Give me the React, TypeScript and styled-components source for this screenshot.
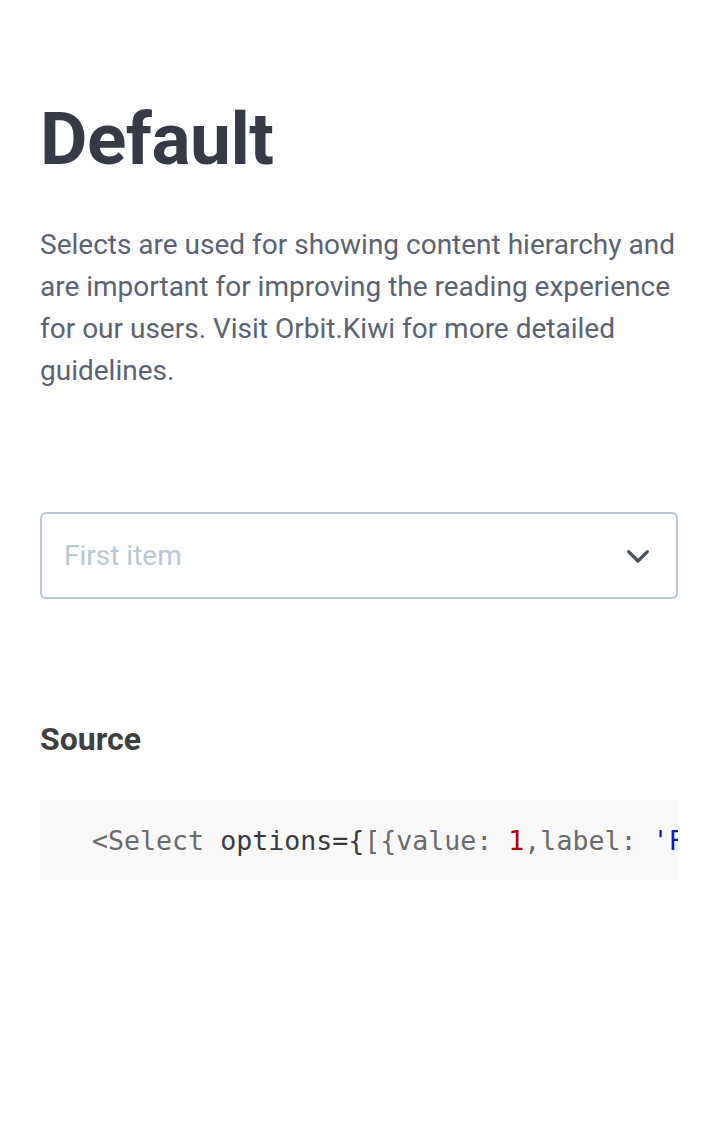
import React from 'react'
import styled, { createGlobalStyle } from 'styled-components'

const GlobalStyle = createGlobalStyle`
  html, body {
    margin: 0;
    padding: 0;
    background: #ffffff;
  }
  body {
    font-family: Roboto, 'Liberation Sans', sans-serif;
  }
`

const Page = styled.div`
  padding: 96px 40px 40px;
  display: flex;
  flex-direction: column;
`

const Title = styled.h1`
  margin: 0;
  font-size: 73px;
  font-weight: 700;
  line-height: 86px;
  color: #353a46;
  letter-spacing: -0.5px;
`

const Lead = styled.p`
  margin: 42px 0 0;
  font-size: 28px;
  line-height: 42px;
  color: #5b6272;
`

const SelectBox = styled.div`
  margin-top: 120px;
  height: 87px;
  box-sizing: border-box;
  border: 2px solid #bac7d5;
  border-radius: 6px;
  display: flex;
  align-items: center;
  justify-content: space-between;
  padding: 0 23px 0 22px;
`

const Placeholder = styled.span`
  font-size: 28px;
  color: #bac7d5;
`

const Chevron = styled.svg`
  width: 30px;
  height: 30px;
  display: block;
`

const SectionTitle = styled.h3`
  margin: 120px 0 0;
  font-size: 32px;
  font-weight: 700;
  line-height: 40px;
  color: #3f3f3f;
`

const CodeBlock = styled.pre`
  margin: 41px 0 0;
  height: 80px;
  box-sizing: border-box;
  background: #f9f9f9;
  overflow: hidden;
  padding: 0 0 0 20px;
  display: flex;
  align-items: center;
  font-family: 'DejaVu Sans Mono', 'Liberation Mono', monospace;
  font-size: 26.6px;
  white-space: pre;
  color: #666666;
`

const Tok = styled.span<{ $kind?: 'tag' | 'attr' | 'num' | 'str' }>`
  color: ${(p) =>
    p.$kind === 'attr'
      ? '#3a3a3a'
      : p.$kind === 'num'
      ? '#b20000'
      : p.$kind === 'str'
      ? '#1a1aa6'
      : '#6b6b6b'};
`

const App: React.FC = () => {
  return (
    <>
      <GlobalStyle />
      <Page>
        <Title>Default</Title>
        <Lead>
          Selects are used for showing content hierarchy and are important
          for improving the reading experience for our users. Visit
          Orbit.Kiwi for more detailed guidelines.
        </Lead>
        <SelectBox>
          <Placeholder>First item</Placeholder>
          <Chevron viewBox="0 0 24 24">
            <path
              d="M4.5 8.5 L12 16 L19.5 8.5"
              fill="none"
              stroke="#46515e"
              strokeWidth="2.6"
              strokeLinecap="round"
              strokeLinejoin="round"
            />
          </Chevron>
        </SelectBox>
        <SectionTitle>Source</SectionTitle>
        <CodeBlock>
          <code>
            {'  '}
            <Tok>&lt;Select </Tok>
            <Tok $kind="attr">options={'{'}</Tok>
            <Tok>[{'{'}value: </Tok>
            <Tok $kind="num">1</Tok>
            <Tok>,label: </Tok>
            <Tok $kind="str">'First item'</Tok>
            <Tok>{'}'}, {'{'}value: </Tok>
            <Tok $kind="num">2</Tok>
            <Tok>,label: </Tok>
            <Tok $kind="str">'Second item'</Tok>
            <Tok>{'}'}]{'}'} /&gt;</Tok>
          </code>
        </CodeBlock>
      </Page>
    </>
  )
}

export default App
